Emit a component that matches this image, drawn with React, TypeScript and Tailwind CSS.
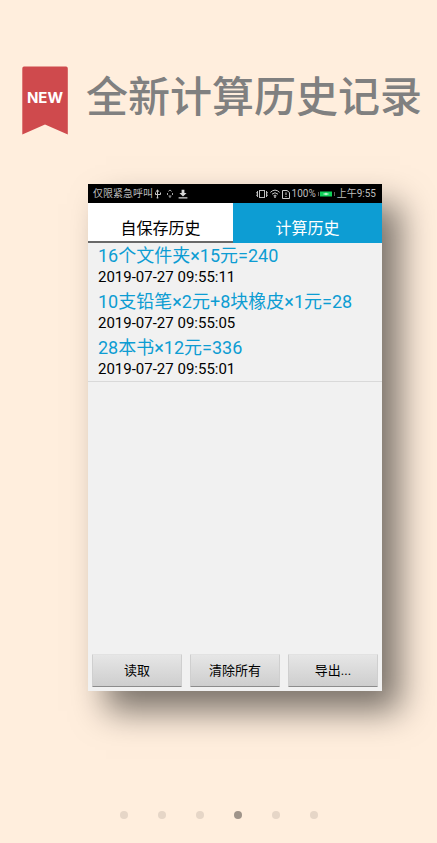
import { useState } from 'react';
import clsx from 'clsx';

type HistoryEntry = {
  expression: string;
  time: string;
};

const HISTORY: HistoryEntry[] = [
  { expression: '16个文件夹×15元=240', time: '2019-07-27 09:55:11' },
  { expression: '10支铅笔×2元+8块橡皮×1元=28', time: '2019-07-27 09:55:05' },
  { expression: '28本书×12元=336', time: '2019-07-27 09:55:01' },
];

const TABS = ['自保存历史', '计算历史'];
const ACTIONS = ['读取', '清除所有', '导出...'];
const SLIDES = [0, 1, 2, 3, 4, 5];

function NewRibbon() {
  return (
    <div className="relative flex h-[69px] w-[46px] shrink-0 justify-center">
      <svg viewBox="0 0 46 69" className="absolute inset-0 h-full w-full" aria-hidden="true">
        <path d="M2 0.5H44Q45.8 0.5 45.8 2.5V68.5L23 58.5L0.3 68.5V2.5Q0.3 0.5 2 0.5Z" fill="#cf4a4d" />
      </svg>
      <span className="relative pt-6 font-['Inter','Noto_Sans',sans-serif] text-[15px] leading-4 font-bold text-white">
        NEW
      </span>
    </div>
  );
}

function UsbIcon() {
  return (
    <svg viewBox="0 0 8 10" className="h-[10px] w-2" fill="none" stroke="#c8c8c8" aria-hidden="true">
      <path d="M3.5 1V9M1.5 3.5V5.5H6.5V3.5" />
      <path d="M2 2.6L3.5 0.6L5 2.6Z" fill="#c8c8c8" strokeWidth="0.4" />
      <circle cx="3.5" cy="8.7" r="0.9" fill="#c8c8c8" stroke="none" />
    </svg>
  );
}

function UsbFaintIcon() {
  return (
    <svg viewBox="0 0 8 10" className="h-[10px] w-2" fill="none" stroke="#a8a8a8" aria-hidden="true">
      <path d="M2.4 2.4L4 1L5.6 2.4M1.5 4V6M6.5 4V6M2.6 7H5.4M4 7V9" />
    </svg>
  );
}

function DownloadIcon() {
  return (
    <svg viewBox="0 0 10 10" className="size-[10px]" fill="#d6d6d6" aria-hidden="true">
      <path d="M3.6 0.8H6.4V4H8.6L5 7.4L1.4 4H3.6ZM0.6 8.2H9.4V9.4H0.6Z" />
    </svg>
  );
}

function VibrateIcon() {
  return (
    <svg viewBox="0 0 12 10" className="h-[10px] w-3" fill="none" stroke="#bdbdbd" aria-hidden="true">
      <rect x="3.5" y="1.5" width="5" height="7" />
      <path d="M1.5 2V8M10.5 2V8" />
      <path d="M0.5 3V4.4M0.5 5.6V7M11.5 3V4.4M11.5 5.6V7" strokeWidth="0.7" />
    </svg>
  );
}

function WifiIcon() {
  return (
    <svg viewBox="0 0 10 9" className="h-[9px] w-[10px]" fill="none" stroke="#c8c8c8" aria-hidden="true">
      <path d="M0.4 3.4Q5 -1.2 9.6 3.4M2 5.2Q5 2.2 8 5.2M3.5 6.8Q5 5.4 6.5 6.8" />
      <circle cx="5" cy="8" r="0.9" fill="#c8c8c8" stroke="none" />
    </svg>
  );
}

function SimAlertIcon() {
  return (
    <svg viewBox="0 0 8 10" className="h-[10px] w-2" fill="none" stroke="#c8c8c8" aria-hidden="true">
      <path d="M0.5 1.5H5L7.5 3.5V9.5H0.5Z" />
      <path d="M4 3.4V6M4 7V8" />
    </svg>
  );
}

function BatteryIcon() {
  return (
    <svg viewBox="0 0 17 6" className="h-[6px] w-[17px]" aria-hidden="true">
      <path d="M0.5 1V5M16.5 1V5" stroke="#5c5c5c" />
      <rect x="2" y="0.5" width="12" height="5" fill="#0fd058" />
      <path d="M5.5 3H10.5M8 1.8V4.2" stroke="#eaffef" />
    </svg>
  );
}

function StatusBar() {
  return (
    <div className="flex h-[19px] items-center justify-between bg-black pr-1.5 pl-[5px] text-[10px] leading-3 text-[#bdbdbd]">
      <div className="flex items-center">
        <span>仅限紧急呼叫</span>
        <div className="flex items-center gap-1 pl-px">
          <UsbIcon />
          <UsbFaintIcon />
          <DownloadIcon />
        </div>
      </div>
      <div className="flex items-center gap-0.5">
        <VibrateIcon />
        <WifiIcon />
        <SimAlertIcon />
        <span>100%</span>
        <BatteryIcon />
        <span>上午9:55</span>
      </div>
    </div>
  );
}

export default function App() {
  const [tab, setTab] = useState(0);
  const [slide, setSlide] = useState(3);

  return (
    <main className="flex min-h-screen flex-col bg-[#ffeedd] font-['Roboto','Noto_Sans_CJK_SC',sans-serif]">
      <header className="flex items-start gap-[18px] px-[22px] pt-[66px]">
        <NewRibbon />
        <h1 className="pt-0.5 text-[42px] leading-[60px] font-medium whitespace-nowrap text-[#808080]">
          全新计算历史记录
        </h1>
      </header>

      <section className="mt-[49px] mr-[55px] ml-[88px] flex flex-col bg-[#f1f1f1] shadow-[18px_20px_32px_rgba(0,0,0,0.52)]">
        <StatusBar />

        <div className="grid grid-cols-[145fr_149fr]">
          {TABS.map((label, i) => (
            <button
              key={label}
              type="button"
              onClick={() => setTab(i)}
              className={clsx(
                'h-10 border-b-2 pt-3.5 text-base leading-6',
                tab === i ? 'border-[#696969] bg-white text-black' : 'border-[#0d9dd3] bg-[#0d9dd3] text-white',
              )}
            >
              {label}
            </button>
          ))}
        </div>

        <ul className="border-b border-[#d9d9d9]">
          {HISTORY.map((entry) => (
            <li key={entry.time} className="h-[46px] px-[10px] pt-px whitespace-nowrap">
              <p className="text-lg leading-6 text-[#0d9dd3]">{entry.expression}</p>
              <p className="text-[15px] leading-[18px] text-black">{entry.time}</p>
            </li>
          ))}
        </ul>

        <div className="mt-[268px] grid grid-cols-3 gap-2 p-1">
          {ACTIONS.map((label) => (
            <button
              key={label}
              type="button"
              className="h-[33px] rounded-[1px] border border-x-[#cfcfcf] border-t-[#e2e2e2] border-b-[#8c8c8c] bg-linear-to-b from-[#e6e6e6] to-[#cecece] text-[13px] leading-5 text-black"
            >
              {label}
            </button>
          ))}
        </div>
      </section>

      <nav className="mt-auto flex justify-center gap-[30px] pb-6" aria-label="slides">
        {SLIDES.map((n) => (
          <button
            key={n}
            type="button"
            aria-label={`slide ${n + 1}`}
            onClick={() => setSlide(n)}
            className={clsx('size-2 rounded-full', n === slide ? 'bg-[#9f948a]' : 'bg-[#e6d6c7]')}
          />
        ))}
      </nav>
    </main>
  );
}
